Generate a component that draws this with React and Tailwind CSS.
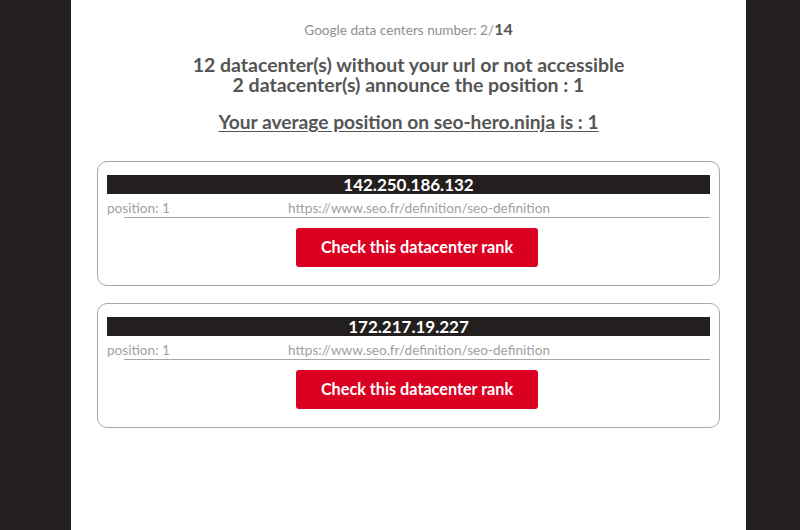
const datacenters = [
  { ip: '142.250.186.132', position: 1, url: 'https://www.seo.fr/definition/seo-definition' },
  { ip: '172.217.19.227', position: 1, url: 'https://www.seo.fr/definition/seo-definition' },
];

function DatacenterCard({ dc }) {
  return (
    <div className="border border-[#a8a8a8] rounded-[10px] px-[9px] pt-[13px] pb-[18px]">
      <div className="bg-[#231f1e] text-white text-center font-bold text-[17px] leading-[19px]">
        {dc.ip}
      </div>
      <div className="flex text-[13.6px] text-[#a0a0a0] leading-[16px] pt-[6px]">
        <span className="w-[181px] shrink-0">position: {dc.position}</span>
        <span>{dc.url}</span>
      </div>
      <div className="ml-[17px] border-b border-[#a8a8a8] mt-[1px]" />
      <div className="flex justify-center pl-[17px] pt-[10px]">
        <button className="w-[242px] h-[39px] bg-[#db0022] text-white font-bold text-[16.2px] rounded-[3px]">
          Check this datacenter rank
        </button>
      </div>
    </div>
  );
}

export default function App() {
  return (
    <div
      className="w-[800px] h-[530px] bg-[#231f1e] flex pl-[71px] overflow-hidden"
      style={{ fontFamily: 'Lato, "Open Sans", sans-serif' }}
    >
      <div className="w-[675px] bg-white flex flex-col items-center pt-[19px]">
        <p className="text-[13.6px] text-[#8f8f8f] leading-[20px]">
          Google data centers number: 2/<span className="font-bold text-[16px] text-[#555]">14</span>
        </p>
        <div className="mt-[15px] text-center font-bold text-[19.5px] leading-[20px] text-[#555]">
          <p>12 datacenter(s) without your url or not accessible</p>
          <p>2 datacenter(s) announce the position : 1</p>
        </div>
        <p className="mt-[17px] font-bold text-[19.2px] leading-[20px] text-[#555] underline underline-offset-2">
          Your average position on seo-hero.ninja is : 1
        </p>
        <div className="w-[623px] mt-[29px] flex flex-col gap-[17px]">
          {datacenters.map(dc => (
            <DatacenterCard key={dc.ip} dc={dc} />
          ))}
        </div>
      </div>
    </div>
  );
}
